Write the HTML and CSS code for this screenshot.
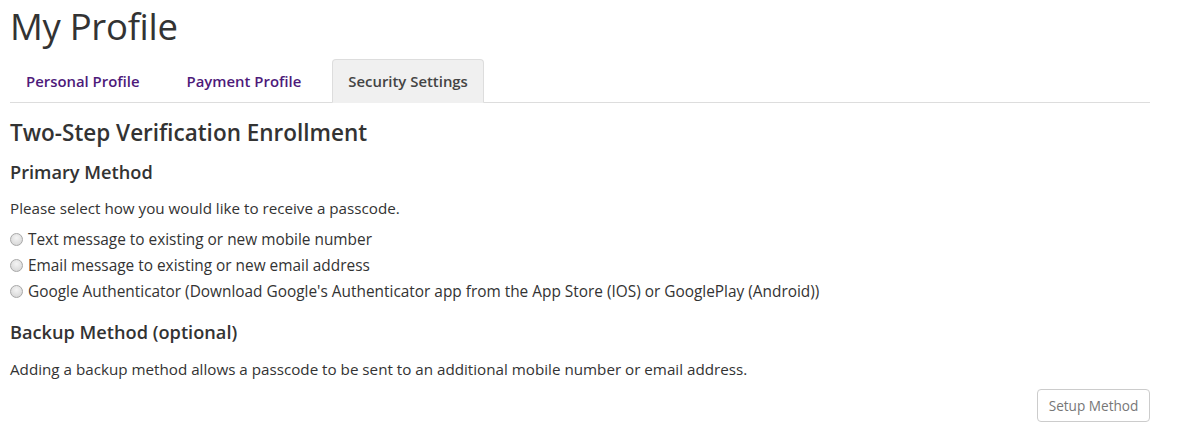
FILE: index.html
```
<!DOCTYPE html>
<html lang="en">
<head>
<meta charset="utf-8">
<title>My Profile</title>
<link rel="stylesheet" href="styles.css">
</head>
<body>
<div class="container">
  <h1 class="page-title">My Profile</h1>
  <ul class="tabs">
    <li class="tab"><a href="#">Personal Profile</a></li>
    <li class="tab"><a href="#">Payment Profile</a></li>
    <li class="tab active"><a href="#">Security Settings</a></li>
  </ul>
  <h2 class="section-title">Two-Step Verification Enrollment</h2>
  <h3 class="sub-title">Primary Method</h3>
  <p class="text">Please select how you would like to receive a passcode.</p>
  <div class="options">
    <label class="option"><span class="radio"></span>Text message to existing or new mobile number</label>
    <label class="option"><span class="radio"></span>Email message to existing or new email address</label>
    <label class="option"><span class="radio"></span>Google Authenticator (Download Google's Authenticator app from the App Store (IOS) or GooglePlay (Android))</label>
  </div>
  <h3 class="sub-title backup">Backup Method (optional)</h3>
  <p class="text backup-text">Adding a backup method allows a passcode to be sent to an additional mobile number or email address.</p>
  <div class="actions">
    <button class="btn" type="button">Setup Method</button>
  </div>
</div>
</body>
</html>
```
FILE: styles.css
```
* { box-sizing: border-box; }
html, body { margin: 0; padding: 0; background: #fff; }
body {
  font-family: "Open Sans", "Noto Sans", sans-serif;
  font-size: 15.2px;
  color: #333;
}
.container {
  width: 1140px;
  margin-left: 10px;
}
.page-title {
  margin: 0;
  padding-top: 4px;
  font-size: 36.5px;
  font-weight: 500;
  line-height: 44px;
  color: #333;
  letter-spacing: -0.3px;
}
.tabs {
  list-style: none;
  margin: 11px 0 0;
  padding: 0;
  display: flex;
  gap: 15px;
  border-bottom: 1px solid #ddd;
}
.tab {
  margin-bottom: -1px;
}
.tab a {
  display: block;
  height: 44px;
  padding: 0 15px;
  line-height: 42px;
  font-size: 14.9px;
  font-weight: 600;
  color: #4e1a7a;
  text-decoration: none;
  border: 1px solid transparent;
  border-radius: 4px 4px 0 0;
}
.tab.active a {
  background: #f0f0f0;
  border-color: #ddd;
  border-bottom-color: #f0f0f0;
  color: #444;
}
.section-title {
  margin: 16px 0 0;
  font-size: 22.5px;
  font-weight: 600;
  line-height: 28px;
  color: #333;
}
.sub-title {
  margin: 13px 0 0;
  font-size: 18.2px;
  font-weight: 600;
  line-height: 24px;
  color: #333;
}
.text {
  margin: 13px 0 0;
  line-height: 22px;
}
.backup-text {
  margin-top: 14px;
}
.options {
  display: flex;
  flex-direction: column;
  margin-top: 7px;
}
.option {
  display: flex;
  align-items: center;
  height: 26px;
  font-size: 15.4px;
  cursor: pointer;
}
.radio {
  width: 13px;
  height: 13px;
  border-radius: 50%;
  border: 1px solid #a8a8a8;
  background: radial-gradient(circle at 50% 35%, #f4f4f4 0%, #dcdcdc 70%, #cfcfcf 100%);
  margin-right: 5px;
  flex: none;
}
.backup {
  margin-top: 16px;
}
.actions {
  display: flex;
  justify-content: flex-end;
  margin-top: 9px;
}
.btn {
  font-family: "Open Sans", "Noto Sans", sans-serif;
  font-size: 13.6px;
  color: #777;
  background: #fff;
  border: 1px solid #ccc;
  border-radius: 4px;
  height: 33px;
  width: 113px;
  padding: 0;
  cursor: pointer;
}
```
